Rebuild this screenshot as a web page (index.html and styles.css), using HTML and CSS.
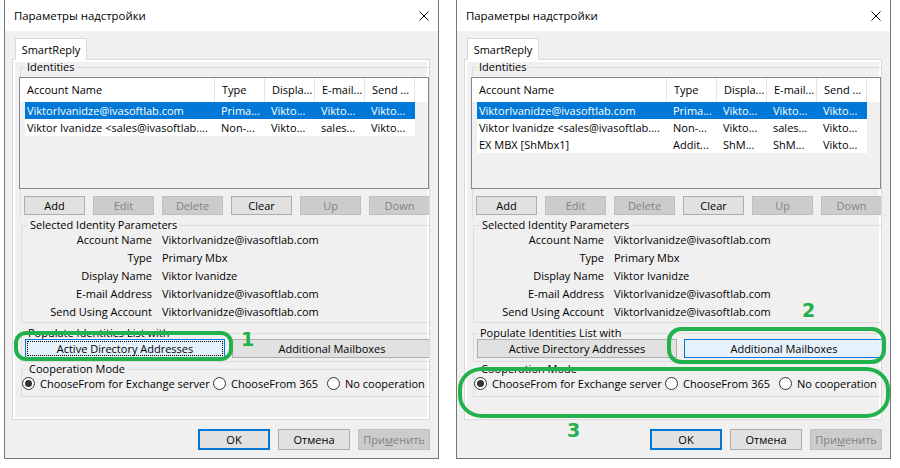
FILE: index.html
```html
<!DOCTYPE html>
<html lang="ru">
<head>
    <meta charset="UTF-8">
    <title>Параметры надстройки</title>
    <link rel="stylesheet" href="styles.css">
</head>
<body>
    <div class="dialog">
        <div class="titlebar">
            <span class="title">Параметры надстройки</span>
            <svg class="close" viewBox="0 0 10 10"><path d="M0.5 0.5L9.5 9.5M9.5 0.5L0.5 9.5" stroke="#111" stroke-width="1"/></svg>
        </div>
        <div class="dialog-body">
            <div class="tabs"><div class="tab">SmartReply</div></div>
            <div class="panel">
                <fieldset class="group group-identities">
                    <legend>Identities</legend>
                    <div class="list">
                        <div class="list-head">
                            <span class="col-name">Account Name</span>
                            <span>Type</span>
                            <span>Displa...</span>
                            <span>E-mail...</span>
                            <span>Send ...</span>
                        </div>
                        <div class="row selected">
                            <span class="col-name">ViktorIvanidze@ivasoftlab.com</span>
                            <span>Prima...</span>
                            <span>Vikto...</span>
                            <span>Vikto...</span>
                            <span>Vikto...</span>
                        </div>
                        <div class="row">
                            <span class="col-name">Viktor Ivanidze &lt;sales@ivasoftlab....</span>
                            <span>Non-...</span>
                            <span>Vikto...</span>
                            <span>sales...</span>
                            <span>Vikto...</span>
                        </div>
                    </div>
                    <div class="btn-row">
                        <button class="btn">Add</button>
                        <button class="btn disabled">Edit</button>
                        <button class="btn disabled">Delete</button>
                        <button class="btn">Clear</button>
                        <button class="btn disabled">Up</button>
                        <button class="btn disabled">Down</button>
                    </div>
                </fieldset>

                <fieldset class="group group-selected">
                    <legend>Selected Identity Parameters</legend>
                    <div class="params">
                        <span class="param-label">Account Name</span><span>ViktorIvanidze@ivasoftlab.com</span>
                        <span class="param-label">Type</span><span>Primary Mbx</span>
                        <span class="param-label">Display Name</span><span>Viktor Ivanidze</span>
                        <span class="param-label">E-mail Address</span><span>ViktorIvanidze@ivasoftlab.com</span>
                        <span class="param-label">Send Using Account</span><span>ViktorIvanidze@ivasoftlab.com</span>
                    </div>
                </fieldset>

                <fieldset class="group group-populate">
                    <legend>Populate Identities List with</legend>
                    <div class="populate-row">
                        <button class="btn wide focused">Active Directory Addresses</button>
                        <button class="btn wide">Additional Mailboxes</button>
                    </div>
                </fieldset>

                <fieldset class="group group-coop">
                    <legend>Cooperation Mode</legend>
                    <div class="radios">
                        <label class="radio radio-1 checked"><i></i>ChooseFrom for Exchange server</label>
                        <label class="radio radio-2"><i></i>ChooseFrom 365</label>
                        <label class="radio"><i></i>No cooperation</label>
                    </div>
                </fieldset>
            </div>
            <div class="footer">
                <button class="btn default">OK</button>
                <button class="btn">Отмена</button>
                <button class="btn disabled">При<u>м</u>енить</button>
            </div>
        </div>
    </div>

    <div class="dialog">
        <div class="titlebar">
            <span class="title">Параметры надстройки</span>
            <svg class="close" viewBox="0 0 10 10"><path d="M0.5 0.5L9.5 9.5M9.5 0.5L0.5 9.5" stroke="#111" stroke-width="1"/></svg>
        </div>
        <div class="dialog-body">
            <div class="tabs"><div class="tab">SmartReply</div></div>
            <div class="panel">
                <fieldset class="group group-identities">
                    <legend>Identities</legend>
                    <div class="list">
                        <div class="list-head">
                            <span class="col-name">Account Name</span>
                            <span>Type</span>
                            <span>Displa...</span>
                            <span>E-mail...</span>
                            <span>Send ...</span>
                        </div>
                        <div class="row selected">
                            <span class="col-name">ViktorIvanidze@ivasoftlab.com</span>
                            <span>Prima...</span>
                            <span>Vikto...</span>
                            <span>Vikto...</span>
                            <span>Vikto...</span>
                        </div>
                        <div class="row">
                            <span class="col-name">Viktor Ivanidze &lt;sales@ivasoftlab....</span>
                            <span>Non-...</span>
                            <span>Vikto...</span>
                            <span>sales...</span>
                            <span>Vikto...</span>
                        </div>
                        <div class="row">
                            <span class="col-name">EX MBX [ShMbx1]</span>
                            <span>Addit...</span>
                            <span>ShM...</span>
                            <span>ShM...</span>
                            <span>Vikto...</span>
                        </div>
                    </div>
                    <div class="btn-row">
                        <button class="btn">Add</button>
                        <button class="btn disabled">Edit</button>
                        <button class="btn disabled">Delete</button>
                        <button class="btn">Clear</button>
                        <button class="btn disabled">Up</button>
                        <button class="btn disabled">Down</button>
                    </div>
                </fieldset>

                <fieldset class="group group-selected">
                    <legend>Selected Identity Parameters</legend>
                    <div class="params">
                        <span class="param-label">Account Name</span><span>ViktorIvanidze@ivasoftlab.com</span>
                        <span class="param-label">Type</span><span>Primary Mbx</span>
                        <span class="param-label">Display Name</span><span>Viktor Ivanidze</span>
                        <span class="param-label">E-mail Address</span><span>ViktorIvanidze@ivasoftlab.com</span>
                        <span class="param-label">Send Using Account</span><span>ViktorIvanidze@ivasoftlab.com</span>
                    </div>
                </fieldset>

                <fieldset class="group group-populate">
                    <legend>Populate Identities List with</legend>
                    <div class="populate-row">
                        <button class="btn wide">Active Directory Addresses</button>
                        <button class="btn wide hover">Additional Mailboxes</button>
                    </div>
                </fieldset>

                <fieldset class="group group-coop">
                    <legend>Cooperation Mode</legend>
                    <div class="radios">
                        <label class="radio radio-1 checked"><i></i>ChooseFrom for Exchange server</label>
                        <label class="radio radio-2"><i></i>ChooseFrom 365</label>
                        <label class="radio"><i></i>No cooperation</label>
                    </div>
                </fieldset>
            </div>
            <div class="footer">
                <button class="btn default">OK</button>
                <button class="btn">Отмена</button>
                <button class="btn disabled">При<u>м</u>енить</button>
            </div>
        </div>
    </div>

    <!-- green callouts drawn over the screenshot -->
    <div class="mark mark-1"></div>
    <div class="num num-1">1</div>
    <div class="mark mark-2"></div>
    <div class="num num-2">2</div>
    <div class="mark mark-3"></div>
    <div class="num num-3">3</div>
</body>
</html>
```

FILE: styles.css
```css
body {
    margin: 0;
    padding: 0 0 0 4px;
    height: 468px;
    overflow: hidden;
    position: relative;
    display: flex;
    gap: 17px;
    background: #fff;
    color: #000;
    font-family: "Open Sans", "Noto Sans", sans-serif;
    font-size: 11px;
}

.dialog {
    flex: none;
    width: 435px;
    height: 459px;
    box-sizing: border-box;
    border: 1px solid #767676;
    border-top: none;
    background: #f0f0f0;
}

.titlebar {
    height: 31px;
    padding: 0 9px;
    display: flex;
    align-items: center;
    justify-content: space-between;
    background: #fff;
}

.title {
    font-size: 11.4px;
}

.close {
    width: 10px;
    height: 10px;
}

.dialog-body {
    padding: 7px 8px 8px 7px;
}

.tabs {
    display: flex;
    height: 21px;
    padding-left: 3px;
}

.tab {
    position: relative;
    z-index: 1;
    width: 72px;
    height: 22px;
    box-sizing: border-box;
    border: 1px solid #d9d9d9;
    border-bottom: none;
    background: #fff;
    text-align: center;
    line-height: 21px;
}

.panel {
    height: 361px;
    box-sizing: border-box;
    border: 1px solid #d9d9d9;
    box-shadow: inset 0 0 0 2px #fff;
    overflow: hidden;
}

.group {
    margin: 0;
    padding: 0;
    min-inline-size: 0;
    border: 1px solid #dcdcdc;
    border-right: none;
}

.group legend {
    padding: 0 2px;
    height: 14px;
    line-height: 14px;
}

.group-identities {
    margin-left: 7px;
    padding-bottom: 3px;
    border-bottom: none;
}

.group-identities legend { margin-left: 4px; }

.list {
    width: 410px;
    height: 112px;
    margin: 3px 0 0 -2px;
    box-sizing: border-box;
    border: 1px solid #828790;
    background: #f0f0f0;
}

.list-head {
    display: flex;
    height: 24px;
    background: #fff;
}

.list-head span {
    width: 50px;
    flex: none;
    box-sizing: border-box;
    padding-left: 7px;
    border-right: 1px solid #e5e5e5;
    line-height: 24px;
    white-space: nowrap;
    overflow: hidden;
}

.list-head .col-name { width: 195px; }

.row {
    display: flex;
    width: 390px;
    height: 17px;
    margin-left: 5px;
    background: #fff;
    line-height: 17px;
}

.row span {
    width: 50px;
    flex: none;
    box-sizing: border-box;
    padding-left: 6px;
    white-space: nowrap;
    overflow: hidden;
}

.row .col-name {
    width: 190px;
    padding-left: 2px;
}

.row.selected {
    background: #0078d7;
    color: #fff;
}

.btn {
    flex: none;
    height: 19px;
    box-sizing: border-box;
    padding: 0;
    border: 1px solid #adadad;
    background: #e1e1e1;
    color: #000;
    font: inherit;
    line-height: 16px;
    white-space: nowrap;
}

.btn.disabled {
    background: #cccccc;
    border-color: #bfbfbf;
    color: #838383;
}

.btn-row {
    display: flex;
    gap: 8px;
    margin-top: 7px;
    padding-left: 3px;
}

.btn-row .btn { width: 61px; }

.group-selected {
    margin-left: 8px;
    padding-bottom: 1px;
}

.group-selected legend { margin-left: 6px; }

.params {
    display: grid;
    grid-template-columns: 130px auto;
    column-gap: 10px;
    margin-top: -1px;
    line-height: 18px;
}

.param-label { text-align: right; }

.group-populate {
    margin: 3px 0 0 8px;
    padding-bottom: 3px;
}

.group-populate legend { margin-left: 4px; }

.populate-row {
    display: flex;
    gap: 7px;
    margin-top: -1px;
    padding-left: 3px;
}

.btn.wide { width: 200px; }

.btn.focused {
    background: #e5f1fb;
    border-color: #0078d7;
    outline: 1px dotted #000;
    outline-offset: -3px;
}

.btn.hover {
    background: #e5f1fb;
    border-color: #0078d7;
}

.group-coop {
    margin-left: 8px;
    padding-bottom: 6px;
}

.group-coop legend { margin-left: 5px; }

.radios {
    display: flex;
    height: 14px;
    align-items: center;
}

.radio {
    flex: none;
    display: flex;
    align-items: center;
    gap: 5px;
    white-space: nowrap;
}

.radio-1 { width: 191px; }
.radio-2 { width: 114px; }

.radio i {
    width: 13px;
    height: 13px;
    box-sizing: border-box;
    border: 1px solid #333;
    border-radius: 50%;
    background: #fff;
    display: flex;
    align-items: center;
    justify-content: center;
}

.radio.checked i::after {
    content: "";
    width: 7px;
    height: 7px;
    border-radius: 50%;
    background: #333;
}

.footer {
    display: flex;
    justify-content: flex-end;
    gap: 8px;
    margin-top: 9px;
}

.footer .btn {
    width: 72px;
    height: 21px;
    line-height: 18px;
}

.btn.default {
    border: 2px solid #0078d7;
}

.mark {
    position: absolute;
    box-sizing: border-box;
    border: 4px solid #22b14c;
}

.mark-1 { left: 14px; top: 331px; width: 219px; height: 30px; border-radius: 12px; }
.mark-2 { left: 667px; top: 327px; width: 219px; height: 37px; border-radius: 14px; }
.mark-3 { left: 458px; top: 367px; width: 432px; height: 51px; border-radius: 24px / 22px; }

.num {
    position: absolute;
    color: #22b14c;
    font: bold 19px/1 "DejaVu Sans", sans-serif;
}

.num-1 { left: 241px; top: 330px; }
.num-2 { left: 802px; top: 301px; }
.num-3 { left: 567px; top: 421px; }
```
